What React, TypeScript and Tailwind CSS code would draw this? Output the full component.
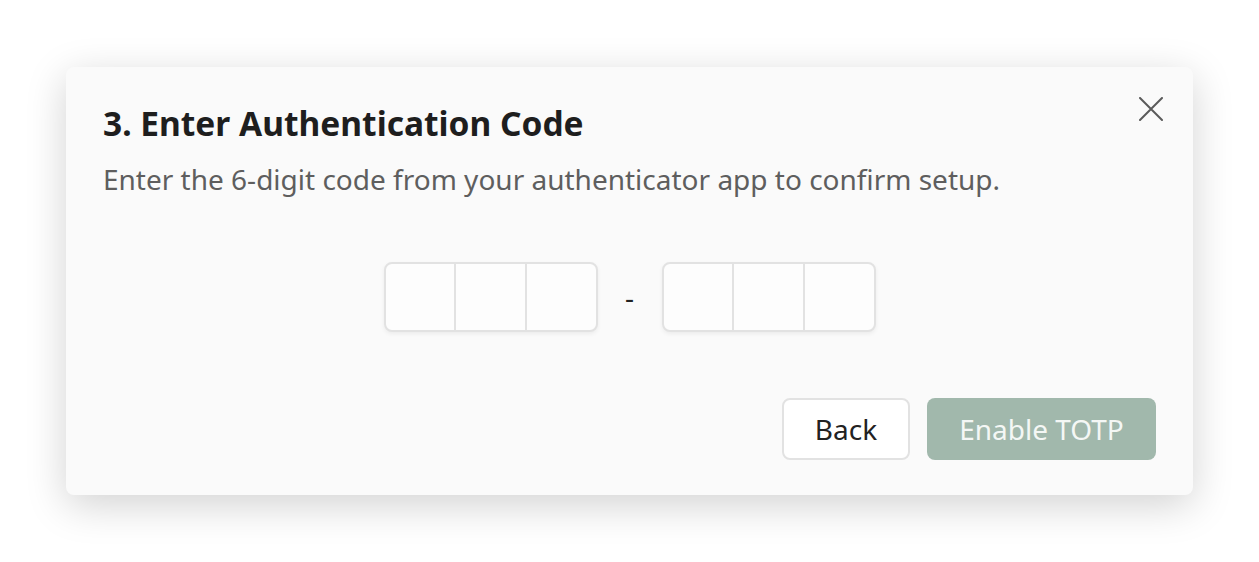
import React from "react";

function Group() {
  return (
    <div className="flex h-[70px] w-[214px] overflow-hidden rounded-[8px] border-2 border-[#e2e2e2] bg-[#fdfdfd] shadow-[0_2px_4px_rgba(0,0,0,0.06)]">
      <div className="flex-1 border-r-2 border-[#e2e2e2]" />
      <div className="flex-1 border-r-2 border-[#e2e2e2]" />
      <div className="flex-1" />
    </div>
  );
}

export default function App() {
  return (
    <div
      className="flex h-[562px] w-[1259px] items-center justify-center bg-white"
      style={{ fontFamily: '"Noto Sans", "Open Sans", sans-serif' }}
    >
      <div className="relative flex h-[428px] w-[1127px] flex-col rounded-[8px] bg-[#fafafa] px-[37px] pt-[34px] pb-[35px] shadow-[0_10px_40px_rgba(0,0,0,0.18)]">
        <button className="absolute right-[30px] top-[30px]" aria-label="Close">
          <svg width="24" height="24" viewBox="0 0 24 24" fill="none" stroke="#5a5a5a" strokeWidth="2" strokeLinecap="round">
            <path d="M1 1L23 23M23 1L1 23" />
          </svg>
        </button>
        <h1 className="text-[33.5px] font-bold leading-[44px] text-[#1e1e1e]">3. Enter Authentication Code</h1>
        <p className="mt-[15px] text-[28px] leading-[38px] text-[#5e5e5e]">
          Enter the 6-digit code from your authenticator app to confirm setup.
        </p>
        <div className="mt-[64px] flex items-center justify-center">
          <Group />
          <span className="w-[64px] text-center text-[28px] text-[#222]">-</span>
          <Group />
        </div>
        <div className="mt-auto flex justify-end gap-[17px]">
          <button className="h-[62px] w-[128px] rounded-[8px] border-2 border-[#e2e2e2] bg-white text-[28px] text-[#222]">
            Back
          </button>
          <button className="h-[62px] w-[229px] rounded-[8px] bg-[#a1b8ac] text-[28px] text-[#f4f7f5]">
            Enable TOTP
          </button>
        </div>
      </div>
    </div>
  );
}
